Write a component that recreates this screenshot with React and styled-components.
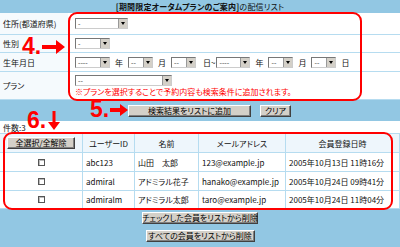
import React from "react";
import styled, { createGlobalStyle } from "styled-components";

const BLUE = "#92c7e3";
const LINE = "#b6dcf0";
const RED = "#ff0000";

const GlobalStyle = createGlobalStyle`
  html, body {
    margin: 0;
    padding: 0;
    background: #fff;
  }
  body {
    font-family: "Noto Sans CJK JP", "Liberation Sans", sans-serif;
    font-size: 8px;
    font-feature-settings: "palt";
    color: #111;
  }
  * {
    box-sizing: border-box;
  }
`;

const Page = styled.div`
  position: relative;
  width: 400px;
  height: 247px;
  overflow: hidden;
  display: flex;
  flex-direction: column;
  background: #fff;
`;

const TitleBar = styled.div`
  height: 13px;
  flex-shrink: 0;
  background: ${BLUE};
  display: flex;
  align-items: center;
  justify-content: center;
  white-space: nowrap;
  letter-spacing: 0.2px;
  b {
    font-weight: bold;
  }
`;

const FormRow = styled.div`
  display: grid;
  grid-template-columns: 68px 1fr;
  flex-shrink: 0;
  height: ${(p) => p.$h}px;
  border-bottom: 1px solid ${LINE};
`;

const Label = styled.div`
  display: flex;
  align-items: center;
  padding-left: 3px;
  background: #f5fafd;
  white-space: nowrap;
`;

const Value = styled.div`
  display: flex;
  flex-direction: ${(p) => (p.$stack ? "column" : "row")};
  align-items: ${(p) => (p.$stack ? "flex-start" : "center")};
  padding: ${(p) => (p.$stack ? "3px 0 0 7px" : "0 0 0 7px")};
  gap: ${(p) => (p.$stack ? "2px" : "5px")};
  white-space: nowrap;
`;

const Select = styled.div`
  display: flex;
  align-items: center;
  width: ${(p) => p.$w}px;
  height: 11px;
  background: #fff;
  border: 1px solid #777;
  border-right-color: #ccc;
  border-bottom-color: #ccc;
  padding-left: 2px;
  font-size: 7px;
  line-height: 1;
  color: #333;
`;

const SelectArrow = styled.span`
  margin-left: auto;
  width: 9px;
  height: 100%;
  background: #d4d0c8;
  border-left: 1px solid #999;
  display: flex;
  align-items: center;
  justify-content: center;
  &::after {
    content: "";
    border-left: 2.5px solid transparent;
    border-right: 2.5px solid transparent;
    border-top: 3px solid #000;
  }
`;

const Tilde = styled.span`
  margin-left: 2px;
  margin-right: -4px;
`;

const Note = styled.div`
  color: ${RED};
  line-height: 1.1;
`;

const ActionBand = styled.div`
  height: 21px;
  flex-shrink: 0;
  background: ${BLUE};
  display: flex;
  align-items: center;
  padding-left: 128px;
  gap: 9px;
`;

const WinButton = styled.button`
  width: ${(p) => p.$w}px;
  height: 12px;
  flex-shrink: 0;
  padding: 0;
  background: #d4d0c8;
  border: 1px solid;
  border-color: #fff #404040 #404040 #fff;
  box-shadow: inset -1px -1px #808080;
  display: flex;
  align-items: center;
  justify-content: center;
  font-family: inherit;
  font-size: 8px;
  font-feature-settings: "palt";
  line-height: 1;
  white-space: nowrap;
  color: #000;
`;

const CountBar = styled.div`
  height: 12px;
  flex-shrink: 0;
  display: flex;
  align-items: center;
  padding-left: 3px;
`;

const TableRow = styled.div`
  display: grid;
  grid-template-columns: 83px 52px 64px 87px 1fr;
  flex-shrink: 0;
  height: ${(p) => p.$h}px;
  background: ${(p) => (p.$head ? "#eef6fc" : "#fff")};
  border-top: ${(p) => (p.$head ? `1px solid ${LINE}` : "none")};
  border-bottom: 1px solid ${LINE};
`;

const Cell = styled.div`
  display: flex;
  align-items: center;
  justify-content: ${(p) => (p.$center ? "center" : "flex-start")};
  padding-left: ${(p) => (p.$center ? 0 : 3)}px;
  border-right: 1px solid ${LINE};
  white-space: nowrap;
  overflow: hidden;
`;

const Check = styled.span`
  width: 7px;
  height: 7px;
  background: #fff;
  border: 1px solid #555;
  box-shadow: inset 1px 1px #bbb;
`;

const BottomBand = styled.div`
  flex: 1;
  background: ${BLUE};
  display: flex;
  flex-direction: column;
  align-items: center;
  padding-top: 3px;
  gap: 6px;
`;

const RedFrame = styled.div`
  position: absolute;
  left: ${(p) => p.$x}px;
  top: ${(p) => p.$y}px;
  width: ${(p) => p.$w}px;
  height: ${(p) => p.$h}px;
  border: 2px solid ${RED};
  border-radius: 9px;
  pointer-events: none;
`;

const StepNum = styled.div`
  position: absolute;
  left: ${(p) => p.$x}px;
  top: ${(p) => p.$y}px;
  font-family: "Liberation Sans", Arial, sans-serif;
  font-weight: bold;
  font-size: 23px;
  line-height: 0.75;
  color: ${RED};
`;

const ArrowSvg = styled.svg`
  position: absolute;
  left: ${(p) => p.$x}px;
  top: ${(p) => p.$y}px;
`;

const Sel = ({ w, text }) => (
  <Select $w={w}>
    {text}
    <SelectArrow />
  </Select>
);

const members = [
  { id: "abc123", name: "山田　太郎", mail: "123@example.jp", date: "2005年10月13日 11時16分", h: 19 },
  { id: "admiral", name: "アドミラル花子", mail: "hanako@example.jp", date: "2005年10月24日 09時41分", h: 19 },
  { id: "admiralm", name: "アドミラル太郎", mail: "taro@example.jp", date: "2005年10月24日 11時04分", h: 18 },
];

export default function App() {
  return (
    <>
      <GlobalStyle />
      <Page>
        <TitleBar>
          <b>[期間限定オータムプランのご案内]</b>の配信リスト
        </TitleBar>

        <FormRow $h={22}>
          <Label>住所(都道府県)</Label>
          <Value>
            <Sel w={53} text="-" />
          </Value>
        </FormRow>
        <FormRow $h={18}>
          <Label>性別</Label>
          <Value>
            <Sel w={35} text="-" />
          </Value>
        </FormRow>
        <FormRow $h={19}>
          <Label>生年月日</Label>
          <Value>
            <Sel w={35} text="----" />
            <span>年</span>
            <Sel w={25} text="--" />
            <span>月</span>
            <Sel w={25} text="--" />
            <Tilde>日~</Tilde>
            <Sel w={34} text="----" />
            <span>年</span>
            <Sel w={25} text="--" />
            <span>月</span>
            <Sel w={25} text="--" />
            <span>日</span>
          </Value>
        </FormRow>
        <FormRow $h={28}>
          <Label>プラン</Label>
          <Value $stack>
            <Sel w={97} text="--" />
            <Note>※プランを選択することで予約内容も検索条件に追加されます。</Note>
          </Value>
        </FormRow>

        <ActionBand>
          <WinButton $w={123}>検索結果をリストに追加</WinButton>
          <WinButton $w={31}>クリア</WinButton>
        </ActionBand>

        <CountBar>件数:3</CountBar>

        <TableRow $head $h={20}>
          <Cell $center>
            <WinButton $w={68}>全選択/全解除</WinButton>
          </Cell>
          <Cell $center>ユーザーID</Cell>
          <Cell $center>名前</Cell>
          <Cell $center>メールアドレス</Cell>
          <Cell $center>会員登録日時</Cell>
        </TableRow>
        {members.map((m) => (
          <TableRow key={m.id} $h={m.h}>
            <Cell $center>
              <Check />
            </Cell>
            <Cell>{m.id}</Cell>
            <Cell>{m.name}</Cell>
            <Cell>{m.mail}</Cell>
            <Cell>{m.date}</Cell>
          </TableRow>
        ))}

        <BottomBand>
          <WinButton $w={116}>チェックした会員をリストから削除</WinButton>
          <WinButton $w={109}>すべての会員をリストから削除</WinButton>
        </BottomBand>

        <RedFrame $x={68} $y={12} $w={294} $h={89} />
        <RedFrame $x={3} $y={132} $w={390} $h={78} />

        <StepNum $x={22} $y={38}>4.</StepNum>
        <ArrowSvg $x={42} $y={40} width="23" height="14" viewBox="0 0 23 14">
          <polygon points="0,5 14,5 14,0 23,7 14,14 14,9 0,9" fill={RED} />
        </ArrowSvg>

        <StepNum $x={90} $y={101}>5.</StepNum>
        <ArrowSvg $x={110} $y={104} width="18" height="12" viewBox="0 0 18 12">
          <polygon points="0,4 10,4 10,0 18,6 10,12 10,8 0,8" fill={RED} />
        </ArrowSvg>

        <StepNum $x={27} $y={112}>6.</StepNum>
        <ArrowSvg $x={48} $y={111} width="12" height="19" viewBox="0 0 12 19">
          <polygon points="4.5,0 7.5,0 7.5,11 12,11 6,19 0,11 4.5,11" fill={RED} />
        </ArrowSvg>
      </Page>
    </>
  );
}
